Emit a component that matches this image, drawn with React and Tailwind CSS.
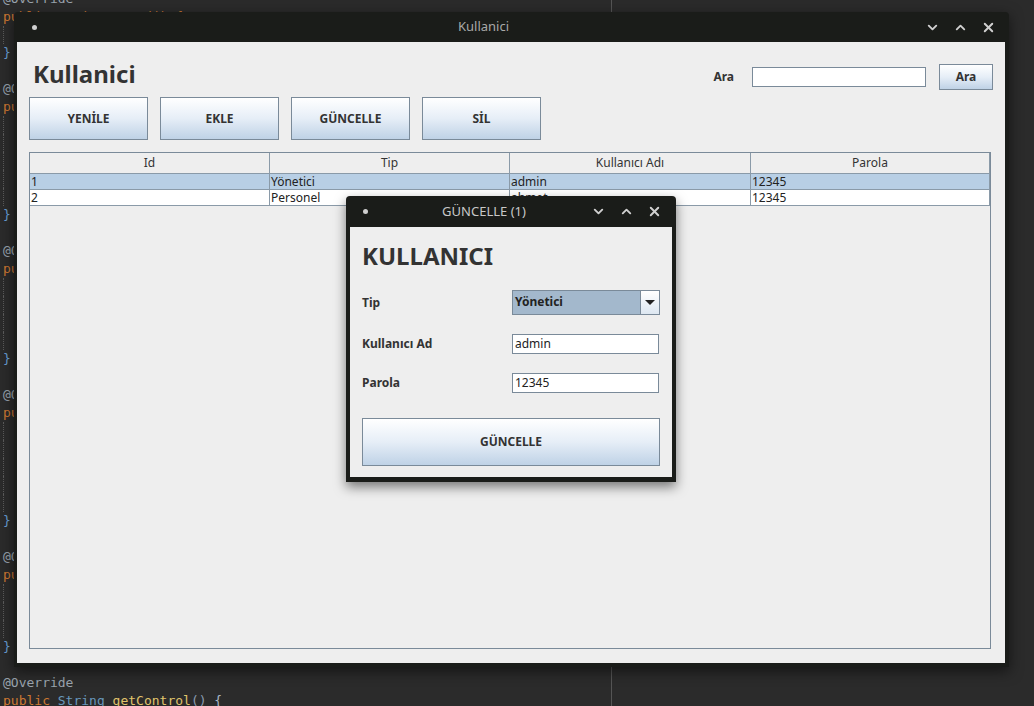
import React from "react";
import { ChevronDown, ChevronUp, X } from "lucide-react";

const codeBlocks = [
  { start: -1, kind: "ann" },
  { start: 0, kind: "sig", text: "public String getId() {" },
  { start: 2, kind: "end" },
  { start: 4, kind: "ann" },
  { start: 5, kind: "sig", text: "public void setId(String id) {" },
  { start: 11, kind: "end" },
  { start: 13, kind: "ann" },
  { start: 14, kind: "sig", text: "public String getTip() {" },
  { start: 19, kind: "end" },
  { start: 21, kind: "ann" },
  { start: 22, kind: "sig", text: "public void setTip(String tip) {" },
  { start: 28, kind: "end" },
  { start: 30, kind: "ann" },
  { start: 31, kind: "sig", text: "public String getName() {" },
  { start: 35, kind: "end" },
  { start: 37, kind: "ann" },
];

const CodeLine = ({ line }) => {
  if (!line) return <div className="h-[18px]" />;
  if (line.kind === "ann")
    return <div className="h-[18px] pl-[3px] text-[#9aa3ad]">@Override</div>;
  if (line.kind === "end")
    return <div className="h-[18px] pl-[3px] text-[#6a9fd4]">{"}"}</div>;
  if (line.kind === "guide")
    return <div className="h-[18px] ml-[3px] border-l border-dotted border-[#5a5a5a]" />;
  if (line.kind === "last")
    return (
      <div className="h-[18px] pl-[3px] whitespace-pre">
        <span className="text-[#cc7832]">public </span>
        <span className="text-[#6897bb]">String </span>
        <span className="text-[#e0c46c]">getControl</span>
        <span className="text-[#8a9bb0]">() </span>
        <span className="text-[#a9b7c6]">{"{"}</span>
      </div>
    );
  return (
    <div className="h-[18px] pl-[3px] whitespace-pre text-[#cc7832]">{line.text}</div>
  );
};

const buildLines = () => {
  const lines = {};
  let open = false;
  for (let i = -1; i <= 38; i++) lines[i] = null;
  codeBlocks.forEach((b) => (lines[b.start] = b));
  for (let i = -1; i <= 38; i++) {
    if (lines[i] && lines[i].kind === "sig") open = true;
    else if (lines[i] && lines[i].kind === "end") open = false;
    else if (!lines[i] && open) lines[i] = { kind: "guide" };
  }
  lines[38] = { kind: "last" };
  return Object.keys(lines)
    .map(Number)
    .sort((a, b) => a - b)
    .map((k) => lines[k]);
};

const TitleIcons = () => (
  <div className="flex items-center gap-[13px] text-[#d0d0d0]">
    <ChevronDown size={15} strokeWidth={3} />
    <ChevronUp size={15} strokeWidth={3} />
    <X size={15} strokeWidth={3} />
  </div>
);

const MetalButton = ({ children, className = "" }) => (
  <button
    className={`border border-[#7a8a99] bg-gradient-to-b from-white via-[#e6eef7] to-[#bfd2e6] text-[12px] font-bold text-[#333] ${className}`}
  >
    {children}
  </button>
);

const TextField = ({ value, className = "" }) => (
  <div
    className={`border border-[#7a8a99] bg-white text-[12px] leading-[18px] pl-[2px] text-[#222] ${className}`}
  >
    {value}
  </div>
);

const rows = [
  ["1", "Yönetici", "admin", "12345"],
  ["2", "Personel", "ahmet", "12345"],
];

const App = () => {
  const lines = buildLines();

  return (
    <div
      className="relative w-[1034px] h-[706px] overflow-hidden bg-[#2b2b2b]"
      style={{ fontFamily: '"Noto Sans", sans-serif' }}
    >
      {/* editor behind */}
      <div
        className="absolute left-0 top-[-10px] flex flex-col text-[13px] leading-[18px]"
        style={{ fontFamily: '"DejaVu Sans Mono", monospace' }}
      >
        {lines.map((l, i) => (
          <CodeLine key={i} line={l} />
        ))}
      </div>
      <div className="absolute left-[611px] top-0 h-full w-px bg-[#555]" />

      {/* main window */}
      <div className="absolute left-[14px] top-[12px] w-[995px] h-[655px] flex flex-col bg-[#1a1c19] rounded-t-[4px] shadow-[0_4px_14px_rgba(0,0,0,0.55)]">
        <div className="relative h-[30px] flex items-center justify-between pl-[18px] pr-[13px]">
          <div className="w-[5px] h-[5px] rounded-full bg-[#cfcfcf]" />
          <div className="absolute left-0 right-[56px] text-center text-[13px] text-[#a8a8a8] pointer-events-none">
            Kullanici
          </div>
          <TitleIcons />
        </div>
        <div className="flex-1 ml-[3px] mr-[4px] mb-[4px] bg-[#eeeeee] px-[12px] flex flex-col">
          <div className="h-[55px] flex justify-between items-start">
            <h1 className="mt-[16px] ml-[4px] text-[24px] leading-[32px] font-bold text-[#333]">
              Kullanici
            </h1>
            <div className="mt-[22px] h-[26px] flex items-center">
              <span className="text-[12px] font-bold text-[#333]">Ara</span>
              <TextField value="" className="ml-[18px] w-[174px] h-[20px]" />
              <MetalButton className="ml-[13px] w-[54px] h-[26px]">Ara</MetalButton>
            </div>
          </div>

          <div className="flex gap-[12px]">
            {["YENİLE", "EKLE", "GÜNCELLE", "SİL"].map((b) => (
              <MetalButton key={b} className="w-[119px] h-[43px]">
                {b}
              </MetalButton>
            ))}
          </div>

          <div className="mt-[12px] w-[962px] h-[497px] border border-[#7a8a99] bg-[#eeeeee]">
            <div className="grid grid-cols-[240px_240px_241px_239px] h-[21px]">
              {["Id", "Tip", "Kullanıcı Adı", "Parola"].map((h) => (
                <div
                  key={h}
                  className="border-r border-b border-[#8a9aa8] text-center text-[12px] leading-[20px] text-[#333]"
                >
                  {h}
                </div>
              ))}
            </div>
            {rows.map((r, ri) => (
              <div
                key={ri}
                className={`grid grid-cols-[240px_240px_241px_239px] h-[16px] ${
                  ri === 0 ? "bg-[#b8cfe5]" : "bg-white"
                }`}
              >
                {r.map((c, ci) => (
                  <div
                    key={ci}
                    className="border-r border-b border-[#8a9aa8] pl-[1px] text-[12px] leading-[15px] text-[#222] overflow-hidden"
                  >
                    {c}
                  </div>
                ))}
              </div>
            ))}
          </div>
        </div>
      </div>

      {/* dialog */}
      <div className="absolute left-[346px] top-[196px] w-[330px] h-[286px] flex flex-col bg-[#1a1c19] rounded-t-[4px] shadow-[0_5px_12px_rgba(0,0,0,0.5)]">
        <div className="relative h-[31px] flex items-center justify-between pl-[17px] pr-[14px]">
          <div className="w-[5px] h-[5px] rounded-full bg-[#cfcfcf]" />
          <div className="absolute left-0 right-[54px] text-center text-[13px] text-[#c8c8c8] pointer-events-none">
            GÜNCELLE (1)
          </div>
          <TitleIcons />
        </div>
        <div className="flex-1 mx-[4px] mb-[5px] bg-[#eeeeee] px-[12px] pt-[13px] flex flex-col">
          <h2 className="text-[24px] leading-[32px] font-bold text-[#333]">KULLANICI</h2>
          <div className="mt-[18px] h-[25px] flex items-center">
            <span className="w-[150px] text-[12px] font-bold text-[#333]">Tip</span>
            <div className="w-[148px] h-[25px] flex border border-[#7a8a99] bg-[#a3b8cc]">
              <div className="flex-1 pl-[2px] text-[12px] font-bold leading-[22px] text-[#222]">
                Yönetici
              </div>
              <div className="w-[19px] border-l border-[#7a8a99] bg-gradient-to-b from-white to-[#dde7f1] flex items-center justify-center">
                <svg width="10" height="6" viewBox="0 0 10 6">
                  <path d="M0 0 L10 0 L5 5 Z" fill="#222" />
                </svg>
              </div>
            </div>
          </div>
          <div className="mt-[19px] h-[20px] flex items-center">
            <span className="w-[150px] text-[12px] font-bold text-[#333]">Kullanıcı Ad</span>
            <TextField value="admin" className="w-[147px] h-[20px]" />
          </div>
          <div className="mt-[19px] h-[20px] flex items-center">
            <span className="w-[150px] text-[12px] font-bold text-[#333]">Parola</span>
            <TextField value="12345" className="w-[147px] h-[20px]" />
          </div>
          <MetalButton className="mt-[25px] w-[298px] h-[48px]">GÜNCELLE</MetalButton>
        </div>
      </div>
    </div>
  );
};

export default App;
